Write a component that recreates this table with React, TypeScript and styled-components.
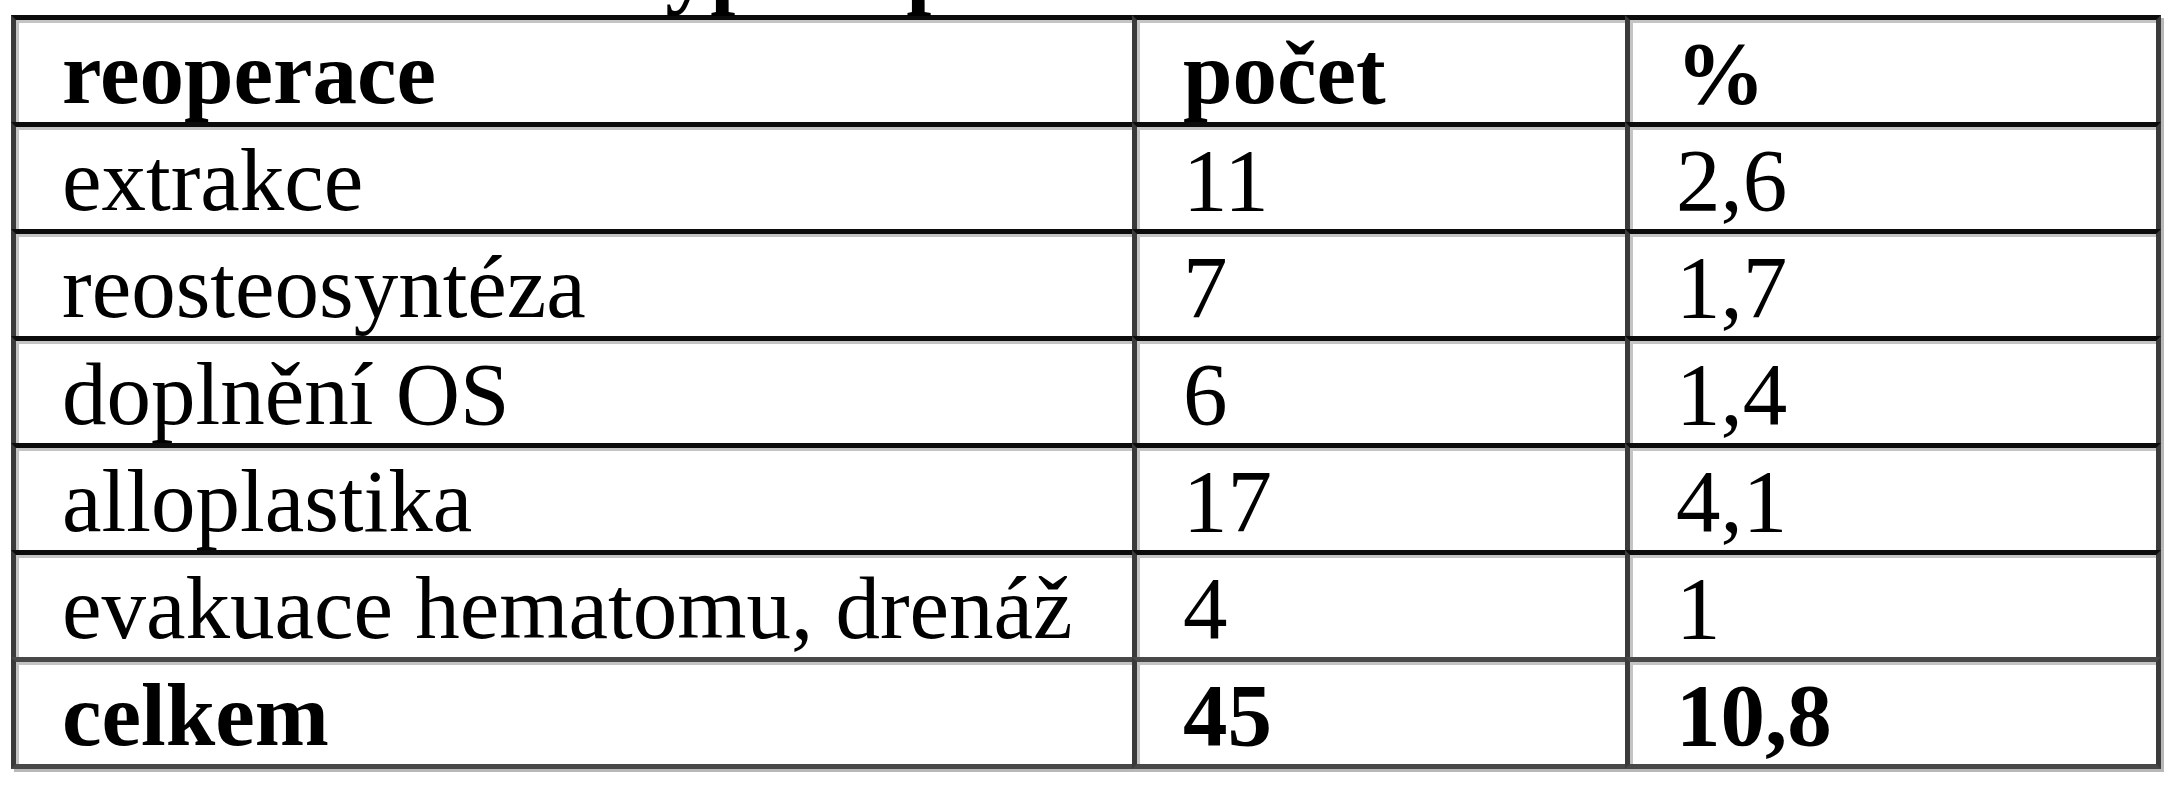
import React from 'react'
import styled, { createGlobalStyle } from 'styled-components'

const GlobalStyle = createGlobalStyle`
    html, body {
        margin: 0;
        padding: 0;
        background: #ffffff;
        overflow: hidden;
    }
    body {
        font-family: "Liberation Serif", "Times New Roman", serif;
        color: #000000;
    }
`

const Page = styled.div`
    width: 2181px;
    height: 800px;
    overflow: hidden;
    background: #ffffff;
`

// caption line sits mostly above the top edge, only descenders show
const Caption = styled.div`
    margin-top: -81px;
    padding-left: 612px;
    height: 96px;
    line-height: 96px;
    font-size: 90px;
    font-weight: bold;
    white-space: nowrap;
`

const Table = styled.table`
    margin-left: 11px;
    width: 2150px;
    border-spacing: 0;
    table-layout: fixed;
    box-shadow: 3px 3px 0 #b8b8b8;
`

const Col = styled.col<{ $w: number }>`
    width: ${p => p.$w}px;
`

const Cell = styled.td<{ $bold?: boolean; $last?: boolean; $soft?: boolean; $right?: boolean }>`
    padding: 5px 0 0 46px;
    height: 97px;
    line-height: 97px;
    font-size: 89px;
    font-weight: ${p => (p.$bold ? 'bold' : 'normal')};
    white-space: nowrap;
    vertical-align: top;
    border-top: 5px solid ${p => (p.$soft ? '#484848' : '#0c0c0c')};
    border-left: 5px solid #3a3a3a;
    border-right: ${p => (p.$right ? '5px solid #3a3a3a' : 'none')};
    border-bottom: ${p => (p.$last ? '5px solid #484848' : 'none')};
    box-shadow: inset 3px 3px 0 #c4c4c4;
`

const rows = [
    ['extrakce', '11', '2,6'],
    ['reosteosyntéza', '7', '1,7'],
    ['doplnění OS', '6', '1,4'],
    ['alloplastika', '17', '4,1'],
    ['evakuace hematomu, drenáž', '4', '1'],
]

function Row({ cells, bold, soft, last }: { cells: string[]; bold?: boolean; soft?: boolean; last?: boolean }) {
    return (
        <tr>
            {cells.map((c, i) => (
                <Cell key={i} $bold={bold} $soft={soft} $last={last} $right={i === cells.length - 1}>
                    {c}
                </Cell>
            ))}
        </tr>
    )
}

export default function App() {
    return (
        <Page>
            <GlobalStyle />
            <Caption>Typ reoperací</Caption>
            <Table>
                <colgroup>
                    <Col $w={1121} />
                    <Col $w={493} />
                    <Col $w={536} />
                </colgroup>
                <tbody>
                    <Row cells={['reoperace', 'počet', '%']} bold />
                    {rows.map(r => (
                        <Row key={r[0]} cells={r} />
                    ))}
                    <Row cells={['celkem', '45', '10,8']} bold soft last />
                </tbody>
            </Table>
        </Page>
    )
}
